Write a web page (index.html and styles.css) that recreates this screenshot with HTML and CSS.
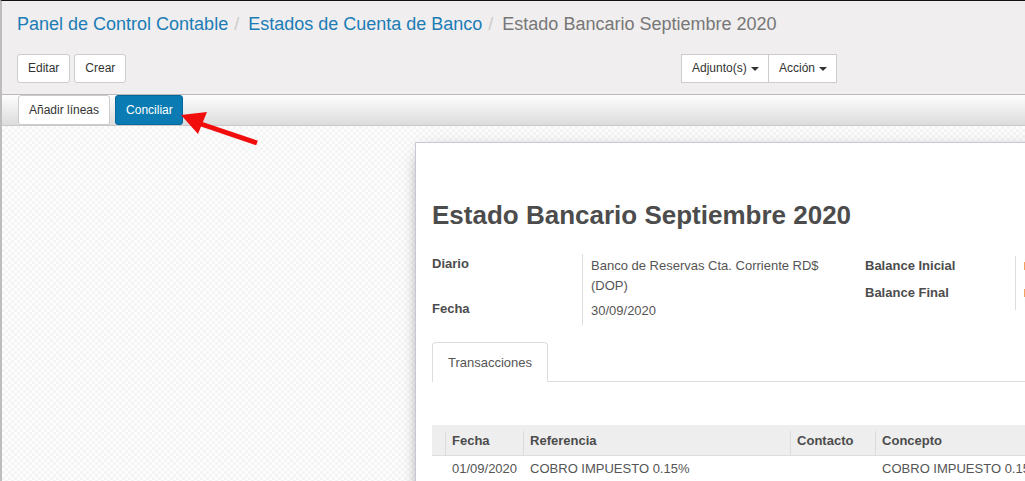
FILE: index.html
```html
<!DOCTYPE html>
<html lang="es">
<head>
  <meta charset="UTF-8">
  <title>Estado Bancario Septiembre 2020</title>
  <link rel="stylesheet" href="styles.css">
</head>
<body>

  <div class="app">
    <div class="control-panel">
      <ol class="breadcrumb">
        <li><a href="#">Panel de Control Contable</a></li>
        <li><a href="#">Estados de Cuenta de Banco</a></li>
        <li class="active">Estado Bancario Septiembre 2020</li>
      </ol>
      <div class="cp-bottom">
        <div class="cp-buttons">
          <button class="btn">Editar</button>
          <button class="btn">Crear</button>
        </div>
        <div class="btn-group">
          <button class="btn">Adjunto(s) <span class="caret"></span></button>
          <button class="btn">Acción <span class="caret"></span></button>
        </div>
      </div>
    </div>

    <div class="form-view">
      <div class="statusbar">
        <button class="btn">Añadir líneas</button>
        <button class="btn btn-primary">Conciliar</button>
      </div>

      <div class="sheet-bg">
        <div class="sheet">
          <h1 class="title">Estado Bancario Septiembre 2020</h1>

          <div class="groups">
            <table class="group group-left">
              <tr>
                <td class="label">Diario</td>
                <td class="value">Banco de Reservas Cta. Corriente RD$<br>(DOP)</td>
              </tr>
              <tr>
                <td class="label">Fecha</td>
                <td class="value">30/09/2020</td>
              </tr>
            </table>
            <table class="group group-right">
              <tr>
                <td class="label">Balance Inicial</td>
                <td class="value"><span class="money"></span></td>
              </tr>
              <tr>
                <td class="label">Balance Final</td>
                <td class="value"><span class="money"></span></td>
              </tr>
            </table>
          </div>

          <div class="tabs">
            <div class="tab active">Transacciones</div>
          </div>

          <table class="lines">
            <thead>
              <tr>
                <th class="handle"></th>
                <th class="c-fecha">Fecha</th>
                <th class="c-ref">Referencia</th>
                <th class="c-contacto">Contacto</th>
                <th class="c-concepto">Concepto</th>
              </tr>
            </thead>
            <tbody>
              <tr>
                <td></td>
                <td>01/09/2020</td>
                <td>COBRO IMPUESTO 0.15%</td>
                <td></td>
                <td>COBRO IMPUESTO 0.15%</td>
              </tr>
            </tbody>
          </table>
        </div>
      </div>
    </div>

    <!-- flecha roja de la captura -->
    <svg class="arrow" width="1025" height="481" viewBox="0 0 1025 481">
      <line x1="198" y1="123" x2="257" y2="143" stroke="#f20d0d" stroke-width="5"/>
      <polygon points="181,115 207,112 198,134" fill="#f20d0d"/>
    </svg>
  </div>

</body>
</html>
```

FILE: styles.css
```css
body {
  margin: 0;
  font-family: 'Liberation Sans', Arial, sans-serif;
  font-size: 13px;
  color: #4c4c4c;
  background: #fff;
  overflow: hidden;
}
.app {
  position: relative;
  height: 481px;
  border-top: 1px solid #111;
  border-left: 2px solid #bdbdbd;
  overflow: hidden;
}

/* panel de control */
.control-panel {
  background-color: #f0eeee;
  padding: 11px 15px 11px;
  border-bottom: 1px solid #b9b9b9;
}
.breadcrumb {
  list-style: none;
  margin: 0;
  padding: 0;
  display: flex;
  font-size: 18px;
  line-height: 24px;
}
.breadcrumb li + li:before {
  content: "/";
  color: #ccc;
  padding: 0 9px 0 6px;
}
.breadcrumb a {
  color: #1b7cb6;
  text-decoration: none;
}
.breadcrumb .active {
  color: #777;
}
.cp-bottom {
  display: flex;
  margin-top: 18px;
}
.cp-buttons {
  width: 664px;
  display: flex;
  gap: 4px;
}
.btn {
  font-family: 'Liberation Sans', Arial, sans-serif;
  font-size: 12px;
  line-height: 17px;
  height: 29px;
  padding: 5px 10px;
  background: #fff;
  color: #333;
  border: 1px solid #ccc;
  border-radius: 3px;
  white-space: nowrap;
  cursor: pointer;
}
.btn-group {
  display: flex;
}
.btn-group .btn {
  border-radius: 0;
}
.btn-group .btn + .btn {
  border-left: none;
}
.btn-group .btn:first-child {
  width: 88px;
}
.btn-group .btn:last-child {
  width: 68px;
}
.caret {
  display: inline-block;
  width: 0;
  height: 0;
  margin-left: 1px;
  vertical-align: middle;
  border-top: 4px solid #333;
  border-left: 4px solid transparent;
  border-right: 4px solid transparent;
}

/* formulario */
.form-view {
  background-color: #fff;
}
.statusbar {
  display: flex;
  gap: 5px;
  height: 30px;
  padding-left: 16px;
  background: linear-gradient(#fdfdfd, #dcdcdc);
  border-bottom: 1px solid #c9c9c9;
}
.statusbar .btn {
  height: 30px;
}
.btn-primary {
  background-color: #0a7bb3;
  border-color: #06679a;
  color: #fff;
  width: 68px;
}
.sheet-bg {
  height: 400px;
  padding: 16px 0 0 413px;
  background: repeating-conic-gradient(#f4f4f4 0 25%, #fdfdfd 0 50%) 0 0 / 6px 6px;
}
.sheet {
  width: 900px;
  min-height: 400px;
  background: #fff;
  border: 1px solid #c8c8d3;
  box-shadow: 0 4px 18px -10px #000;
  padding: 57px 16px 0;
}
.title {
  margin: 0;
  font-size: 26px;
  line-height: 31px;
  font-weight: bold;
  color: #4c4c4c;
}
.groups {
  display: flex;
  align-items: flex-start;
  margin-top: 23px;
}
.group {
  width: 433px;
  border-collapse: collapse;
}
.group td {
  vertical-align: top;
  line-height: 20px;
}
.group .label {
  width: 150px;
  padding: 0;
  font-weight: bold;
  border-right: 1px solid #ddd;
}
.group .value {
  padding: 2px 8px;
  color: #555;
}
.group-left tr:first-child .value {
  padding-bottom: 3px;
}
.group-left tr:last-child .value {
  padding-bottom: 4px;
}
.group-right {
  margin-top: 2px;
}
.group-right .label {
  height: 27px;
}
.group-right .value {
  padding: 6px 8px 0;
}
.money {
  display: block;
  width: 3px;
  height: 8px;
  background: #f0a35e;
}
.tabs {
  display: flex;
  margin-top: 17px;
  border-bottom: 1px solid #ddd;
}
.tab {
  padding: 10px 15px;
  line-height: 19px;
  color: #555;
  border: 1px solid #ddd;
  border-bottom: none;
  border-radius: 4px 4px 0 0;
  background: #fff;
  margin-bottom: -1px;
}
.lines {
  margin-top: 43px;
  border-collapse: collapse;
}
.lines th {
  height: 30px;
  padding: 0 6px 0 7px;
  text-align: left;
  font-weight: bold;
  background: #eee linear-gradient(#dcdcdc, #dcdcdc) left 6px / 1px 100% no-repeat;
  border-bottom: 1px solid #ddd;
}
.lines th.handle {
  width: 12px;
  padding: 0;
  background: #eee;
}
.c-fecha { width: 65px; }
.c-ref { width: 254px; }
.c-contacto { width: 72px; }
.c-concepto { width: 300px; }
.lines td {
  padding: 3px 6px 3px 7px;
  line-height: 20px;
  color: #555;
  white-space: nowrap;
}

.arrow {
  position: absolute;
  left: -2px;
  top: -1px;
  pointer-events: none;
}
```
